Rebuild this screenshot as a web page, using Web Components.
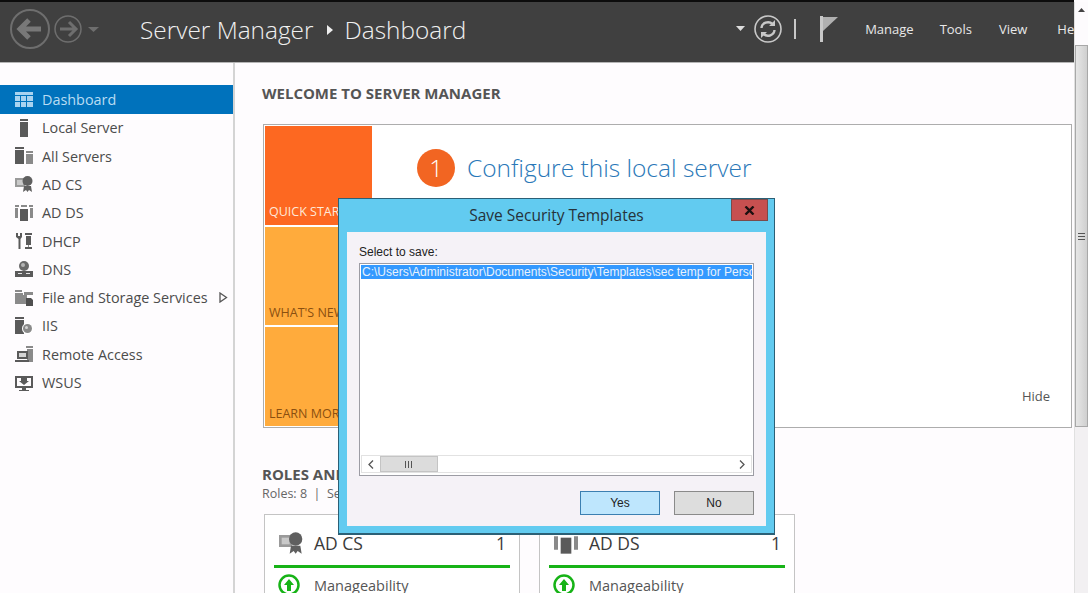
<!DOCTYPE html>
<html>
<head>
<meta charset="utf-8">
<title>Server Manager</title>
<style>
    html, body { margin: 0; height: 100%; overflow: hidden; background: #fefcfe; }
    body { font-family: "Open Sans", "Noto Sans", sans-serif; color: #444; }
</style>
</head>
<body>

<sm-app>
    <sm-header slot="header"></sm-header>

    <sm-nav slot="nav">
        <sm-nav-item label="Dashboard" active>
            <svg width="18" height="16" viewBox="0 0 18 16"><path fill="#a9d3f0" d="M0 0h18v3H0zM0 4h5v5H0zM6 4h5v5H6zM12 4h6v5h-6zM0 10h5v5H0zM6 10h5v5H6zM12 10h6v5h-6z"/></svg>
        </sm-nav-item>
        <sm-nav-item label="Local Server">
            <svg width="18" height="18" viewBox="0 0 18 18"><path fill="#5a5a5a" d="M5 0h8v2H5zM5 3h8v15H5z"/></svg>
        </sm-nav-item>
        <sm-nav-item label="All Servers">
            <svg width="18" height="18" viewBox="0 0 18 18"><path fill="#5a5a5a" d="M0 0h9v2H0zM0 3h9v14H0z"/><path fill="#8a8a8a" d="M11 4h7v2h-7zM11 7h7v10h-7z"/></svg>
        </sm-nav-item>
        <sm-nav-item label="AD CS">
            <svg width="18" height="18" viewBox="0 0 18 18"><path fill="#9a9a9a" d="M0 3h10v9H0z"/><path fill="#c9c9c9" d="M2 5h6v5H2z"/><circle cx="12.500" cy="6" r="5" fill="#5f5f5f"/><path fill="#5f5f5f" d="M9 11l-1 6 3-2 1.500 2 1.500-2 3 2-1-6z"/></svg>
        </sm-nav-item>
        <sm-nav-item label="AD DS">
            <svg width="18" height="18" viewBox="0 0 18 18"><path fill="#8a8a8a" d="M0 1h4v2H0zM14 1h4v2h-4zM0 4h3v10H0zM15 4h3v10h-3zM6 1h6v2H6z"/><path fill="#5a5a5a" d="M5 5h8v12H5z"/></svg>
        </sm-nav-item>
        <sm-nav-item label="DHCP">
            <svg width="18" height="18" viewBox="0 0 18 18"><path fill="#5a5a5a" d="M1 1h2v3h2V1h2v4L5.500 7v10h-2V7L1 5z"/><path fill="#5a5a5a" d="M10 1h7v2h-7zM11 4h5v9h-5zM10 15h7v2h-7z"/><path fill="#8a8a8a" d="M13 13h1v2h-1z"/></svg>
        </sm-nav-item>
        <sm-nav-item label="DNS">
            <svg width="18" height="18" viewBox="0 0 18 18"><circle cx="9" cy="6" r="5" fill="#6a6a6a"/><circle cx="8" cy="5" r="2" fill="#b5b5b5"/><path fill="#5a5a5a" d="M0 11h18v6H0z"/><path fill="#e5e5e5" d="M3 13h4v1H3zM11 13h4v1h-4z"/></svg>
        </sm-nav-item>
        <sm-nav-item label="File and Storage Services" arrow>
            <svg width="18" height="18" viewBox="0 0 18 18"><path fill="#8a8a8a" d="M0 1h7v2H0zM9 3h9v3H9zM0 4h8v11H0z"/><path fill="#8a8a8a" d="M8 6h4v9H8z"/><path fill="#4f4f4f" d="M11 9h5l2 2v6h-7z"/></svg>
        </sm-nav-item>
        <sm-nav-item label="IIS">
            <svg width="18" height="18" viewBox="0 0 18 18"><path fill="#5a5a5a" d="M0 0h9v2H0zM0 3h9v14H0z"/><circle cx="12.500" cy="11.500" r="5.500" fill="#fff"/><circle cx="12.500" cy="11.500" r="4.500" fill="#8a8a8a"/><circle cx="11.500" cy="10.500" r="1.500" fill="#d5d5d5"/></svg>
        </sm-nav-item>
        <sm-nav-item label="Remote Access">
            <svg width="18" height="18" viewBox="0 0 18 18"><path fill="#8a8a8a" d="M11 1h7v2h-7zM12 4h6v13h-6z"/><path fill="#5a5a5a" d="M2 6h11v8H2zM0 15h14v2H0z"/><path fill="#d5d5d5" d="M4 8h7v4H4z"/></svg>
        </sm-nav-item>
        <sm-nav-item label="WSUS">
            <svg width="18" height="18" viewBox="0 0 18 18"><path fill="none" stroke="#5a5a5a" stroke-width="2" d="M6 3H1v10h16V3h-5"/><path fill="#5a5a5a" d="M7 14h4v2h3v1H4v-1h3zM6 2h6v5h2l-5 4-5-4h2z"/></svg>
        </sm-nav-item>
    </sm-nav>

    <sm-welcome></sm-welcome>

    <sm-roles>
        <sm-role-card title="AD CS" count="1">
            <svg width="24" height="24" viewBox="0 0 18 18"><path fill="#9a9a9a" d="M0 3h10v9H0z"/><path fill="#c9c9c9" d="M2 5h6v5H2z"/><circle cx="12.500" cy="6" r="5" fill="#5f5f5f"/><path fill="#5f5f5f" d="M9 11l-1 6 3-2 1.500 2 1.500-2 3 2-1-6z"/></svg>
        </sm-role-card>
        <sm-role-card title="AD DS" count="1">
            <svg width="24" height="24" viewBox="0 0 18 18"><path fill="#8a8a8a" d="M0 1h4v2H0zM14 1h4v2h-4zM0 4h3v10H0zM15 4h3v10h-3zM6 1h6v2H6z"/><path fill="#5a5a5a" d="M5 5h8v12H5z"/></svg>
        </sm-role-card>
    </sm-roles>

    <sm-scrollbar slot="scroll"></sm-scrollbar>
</sm-app>

<sm-dialog title="Save Security Templates">
    C:\Users\Administrator\Documents\Security\Templates\sec temp for Personal Use.inf
</sm-dialog>

<script>
// little helper so every element below is just styles + markup
function shadowFrom(el, html) {
    const template = document.createElement('template')
    template.innerHTML = html
    el.attachShadow({ mode: 'open' })
    el.shadowRoot.appendChild(template.content.cloneNode(true))
}

class SmApp extends HTMLElement {
    constructor() {
        super()
        shadowFrom(this, `
            <style>
                :host { display: flex; height: 593px; width: 1088px; overflow: hidden; }
                #left { flex: 1; min-width: 0; display: flex; flex-direction: column; }
                #body { flex: 1; min-height: 0; display: flex; }
                #main { flex: 1; min-width: 0; padding: 20px 3px 0 27px; overflow: hidden; }
            </style>
            <div id="left">
                <slot name="header"></slot>
                <div id="body">
                    <slot name="nav"></slot>
                    <div id="main"><slot></slot></div>
                </div>
            </div>
            <slot name="scroll"></slot>
        `)
    }
}

class SmHeader extends HTMLElement {
    constructor() {
        super()
        shadowFrom(this, `
            <style>
                :host {
                    display: flex; align-items: center; box-sizing: border-box;
                    height: 63px; background: #404040; overflow: hidden;
                    border-top: 2px solid #0c0c0c; border-bottom: 1px solid #b5b5b5;
                    color: #eee; white-space: nowrap; padding-bottom: 6px;
                }
                svg { flex: none; display: block; }
                #crumb { font-size: 24.400px; font-weight: 300; line-height: 30px; margin-left: 29px; padding-top: 1px; color: #f0f0f0; display: flex; align-items: center; }
                #crumb svg { margin: 0 11px 0 12px; }
                #tools { display: flex; align-items: center; }
                .menu { font-size: 13px; color: #e8e8e8; }
            </style>
            <svg width="101" height="44" viewBox="0 0 101 44" style="margin-left:10px">
                <g fill="none" stroke="#6e6e6e">
                    <circle cx="20" cy="22" r="19" stroke-width="2"/>
                    <circle cx="58" cy="22" r="13" stroke-width="1.500"/>
                </g>
                <path fill="none" stroke="#787878" stroke-width="5" d="M10 22h21M19 13l-9 9 9 9"/>
                <path fill="none" stroke="#6e6e6e" stroke-width="3" d="M50 22h15M59 15l7 7-7 7"/>
                <path fill="#6e6e6e" d="M78 20h11l-5.500 5z"/>
            </svg>
            <div id="crumb">
                <span>Server Manager</span>
                <svg width="8" height="10" viewBox="0 0 8 10"><path fill="#eee" d="M1 0l6 5-6 5z"/></svg>
                <span>Dashboard</span>
            </div>
            <div id="tools" style="margin-left:270px">
                <svg width="9" height="6" viewBox="0 0 9 6"><path fill="#ddd" d="M0 0h9L4.500 5z"/></svg>
                <svg width="30" height="30" viewBox="0 0 30 30" style="margin-left:8px">
                    <circle cx="15" cy="15" r="13" fill="none" stroke="#c8c8c8" stroke-width="1.600"/>
                    <path fill="none" stroke="#c8c8c8" stroke-width="2.400" d="M8.500 14a6.500 6 0 0 1 11-4M21.500 16a6.500 6 0 0 1-11 4"/>
                    <path fill="#c8c8c8" d="M22 6v6h-6zM8 24v-6h6z"/>
                </svg>
                <svg width="2" height="20" viewBox="0 0 2 20" style="margin-left:11px"><path fill="#c8c8c8" d="M0 0h2v20H0z"/></svg>
                <svg width="20" height="26" viewBox="0 0 20 26" style="margin-left:24px">
                    <path fill="#c8c8c8" d="M0 0h3v26H0z"/><path fill="#b0b0b0" d="M3 1h15L3 15z"/>
                </svg>
                <span class="menu" style="margin-left:25px">Manage</span>
                <span class="menu" style="margin-left:26px">Tools</span>
                <span class="menu" style="margin-left:27px">View</span>
                <span class="menu" style="margin-left:30px">Help</span>
            </div>
        `)
    }
}

class SmNav extends HTMLElement {
    constructor() {
        super()
        shadowFrom(this, `
            <style>
                :host {
                    display: flex; flex-direction: column; flex: none; box-sizing: border-box;
                    width: 235px; padding-top: 22.400px; background: #fefcfe;
                    border-right: 2px solid #d4d4d4;
                }
            </style>
            <slot></slot>
        `)
    }
}

class SmNavItem extends HTMLElement {
    constructor() {
        super()
        const arrow = this.hasAttribute('arrow')
            ? '<svg id="arrow" width="9" height="11" viewBox="0 0 9 11"><path fill="none" stroke="#555" stroke-width="1.300" d="M1 1l6.500 4.500L1 10z"/></svg>'
            : ''
        shadowFrom(this, `
            <style>
                :host {
                    display: flex; align-items: center; height: 28.300px; box-sizing: border-box;
                    padding-left: 15px; font-size: 14.400px; color: #4c4c4c; white-space: nowrap;
                }
                :host([active]) { background: #0072bc; color: #b9dcf3; }
                #icon { width: 27px; flex: none; display: flex; }
                #arrow { margin-left: 11px; }
            </style>
            <div id="icon"><slot></slot></div>
            <span>${this.getAttribute('label')}</span>
            ${arrow}
        `)
    }
}

class SmWelcome extends HTMLElement {
    constructor() {
        super()
        shadowFrom(this, `
            <style>
                :host { display: block; }
                h2 { margin: 0; font-size: 15px; line-height: 20px; font-weight: 700; color: #555; white-space: nowrap; }
                #box {
                    box-sizing: border-box; height: 304px; margin: 21px 0 0 1px; width: 809px;
                    border: 1px solid #adadad; background: #fff; padding: 1px; display: flex;
                }
                #tiles { width: 107px; flex: none; display: flex; flex-direction: column; gap: 2px; }
                .tile {
                    flex: 1; display: flex; align-items: flex-end; box-sizing: border-box;
                    padding: 0 0 4.500px 4px; font-size: 12.500px; background: #ffab3c; color: #8a4f10; white-space: nowrap;
                }
                .tile.first { background: #fd6821; color: #ffe8d8; }
                #content { flex: 1; position: relative; display: flex; flex-direction: column; }
                #step { display: flex; align-items: center; margin: 22px 0 0 45px; }
                #num {
                    width: 38px; height: 38px; border-radius: 50%; background: #f26522; color: #fff;
                    font-size: 24px; font-weight: 300; display: flex; align-items: center; justify-content: center;
                }
                #step span { margin-left: 12px; padding-top: 1px; font-size: 24.500px; font-weight: 300; line-height: 38px; color: #2a78b8; }
                #hide { margin: auto 20px 21px auto; font-size: 13px; color: #555; }
            </style>
            <h2>WELCOME TO SERVER MANAGER</h2>
            <div id="box">
                <div id="tiles">
                    <div class="tile first">QUICK START</div>
                    <div class="tile">WHAT'S NEW</div>
                    <div class="tile">LEARN MORE</div>
                </div>
                <div id="content">
                    <div id="step"><div id="num">1</div><span>Configure this local server</span></div>
                    <div id="hide">Hide</div>
                </div>
            </div>
        `)
    }
}

class SmRoles extends HTMLElement {
    constructor() {
        super()
        shadowFrom(this, `
            <style>
                :host { display: block; margin-top: 36px; }
                h2 { margin: 0; font-size: 15px; line-height: 20px; font-weight: 700; color: #555; white-space: nowrap; }
                p { margin: 1px 0 0; font-size: 12.500px; line-height: 18px; color: #666; white-space: nowrap; }
                #cards { display: flex; gap: 19px; margin: 11px 0 0 2px; }
            </style>
            <h2>ROLES AND SERVER GROUPS</h2>
            <p>Roles: 8 &nbsp;|&nbsp; Server groups: 1 &nbsp;|&nbsp; Servers total: 1</p>
            <div id="cards"><slot></slot></div>
        `)
    }
}

class SmRoleCard extends HTMLElement {
    constructor() {
        super()
        shadowFrom(this, `
            <style>
                :host {
                    display: block; box-sizing: border-box; width: 256px; height: 100px; flex: none;
                    border: 1px solid #c4c4c4; background: #fff; padding: 0 9px;
                }
                #top { display: flex; align-items: center; height: 45px; border-bottom: 3px solid #17b317; font-size: 17.500px; color: #3a3a3a; padding: 5px 4px 0 5px; }
                #top span:first-of-type { margin-left: 11px; flex: 1; }
                #icon { display: flex; width: 24px; }
                #row { display: flex; align-items: center; height: 34px; padding-left: 3px; font-size: 14.500px; color: #555; }
                #row svg { margin-right: 13px; }
            </style>
            <div id="top">
                <div id="icon"><slot></slot></div>
                <span>${this.getAttribute('title')}</span>
                <span>${this.getAttribute('count')}</span>
            </div>
            <div id="row">
                <svg width="24" height="24" viewBox="0 0 24 24">
                    <circle cx="12" cy="12" r="9.500" fill="#fff" stroke="#17b317" stroke-width="2.500"/>
                    <path fill="#17b317" d="M12 6l5 6h-3v6h-4v-6H7z"/>
                </svg>
                Manageability
            </div>
        `)
    }
}

class SmScrollbar extends HTMLElement {
    constructor() {
        super()
        shadowFrom(this, `
            <style>
                :host { display: flex; flex-direction: column; flex: none; width: 13px; margin-top: 2px; background: #f2f0f2; border-left: 1px solid #e0e0e0; }
                #up { height: 43px; display: flex; justify-content: center; padding-top: 6px; box-sizing: border-box; background: #fdfbfd; }
                #thumb {
                    height: 382px; display: flex; align-items: center; justify-content: center;
                    border: 1px solid #a8a8a8; box-sizing: border-box;
                    background: linear-gradient(90deg, #e6e6e6, #dcdcdc 45%, #cfcfcf);
                }
            </style>
            <div id="up"><svg width="7" height="4" viewBox="0 0 7 4"><path fill="#444" d="M0 4l3.500-4L7 4z"/></svg></div>
            <div id="thumb"><svg width="7" height="7" viewBox="0 0 7 7"><path fill="#555" d="M0 0h7v1H0zM0 3h7v1H0zM0 6h7v1H0z"/></svg></div>
        `)
    }
}

// the modal lies over the page, this is the only thing placed by coordinates
class SmDialog extends HTMLElement {
    constructor() {
        super()
        shadowFrom(this, `
            <style>
                :host {
                    position: absolute; left: 338px; top: 198px; width: 437px; height: 337px;
                    box-sizing: border-box; border: 1px solid #2b6076; border-bottom-width: 2px;
                    background: #62cbf0; display: flex; flex-direction: column;
                    padding: 0 8px 7px 8px; font-family: "Liberation Sans", sans-serif;
                }
                #bar { height: 33px; flex: none; display: flex; align-items: center; justify-content: center; position: relative; }
                #title { font-family: "Open Sans", sans-serif; font-size: 15.500px; color: #26323a; padding-bottom: 2px; }
                #close {
                    position: absolute; right: -2px; top: 0; width: 37px; height: 22px; box-sizing: border-box;
                    background: #c75050; border: 1px solid #7b4a4a; display: flex; align-items: center; justify-content: center;
                }
                #inner {
                    flex: 1; background: #f5f2f7; padding: 13px 12px 13px 12px; display: flex; flex-direction: column;
                    min-height: 0;
                }
                #label { font-size: 12px; line-height: 15px; color: #222; margin-bottom: 3px; }
                #list { height: 213px; flex: none; box-sizing: border-box; border: 1px solid #9c9ca4; background: #fff; display: flex; flex-direction: column; padding: 1px; }
                #rows { flex: 1; min-height: 0; overflow: hidden; }
                #sel {
                    height: 14px; line-height: 14px; background: #3399ff; color: #e8f2fc; white-space: nowrap; overflow: hidden;
                    font-size: 12px; padding-left: 1px;
                }
                #hbar { height: 18px; margin-bottom: 1px; display: flex; align-items: stretch; border: 1px solid #e2e2e2; box-sizing: border-box; }
                .sb { width: 18px; flex: none; display: flex; align-items: center; justify-content: center; }
                #hthumb { width: 58px; flex: none; background: #dcdcdc; border: 1px solid #c4c4c4; box-sizing: border-box; display: flex; align-items: center; justify-content: center; }
                #track { flex: 1; }
                #btns { display: flex; justify-content: flex-end; gap: 14px; margin-top: 15px; }
                .btn {
                    width: 80px; height: 24px; box-sizing: border-box; display: flex; align-items: center; justify-content: center;
                    font-size: 12px; color: #222; background: #dddddd; border: 1px solid #8a8a8a;
                }
                .btn.def { background: #bee6fd; border-color: #3c7fb1; }
            </style>
            <div id="bar">
                <div id="title">${this.getAttribute('title')}</div>
                <div id="close"><svg width="11" height="9" viewBox="0 0 11 9"><path fill="none" stroke="#1c1010" stroke-width="2.400" d="M1.500 0.500l8 8M9.500 0.500l-8 8"/></svg></div>
            </div>
            <div id="inner">
                <div id="label">Select to save:</div>
                <div id="list">
                    <div id="rows"><div id="sel"><slot></slot></div></div>
                    <div id="hbar">
                        <div class="sb"><svg width="6" height="9" viewBox="0 0 6 9"><path fill="none" stroke="#555" stroke-width="1.300" d="M5 0.500l-4 4 4 4"/></svg></div>
                        <div id="hthumb"><svg width="9" height="7" viewBox="0 0 9 7"><path fill="#555" d="M0 0h1v7H0zM3 0h1v7H3zM6 0h1v7H6z"/></svg></div>
                        <div id="track"></div>
                        <div class="sb"><svg width="6" height="9" viewBox="0 0 6 9"><path fill="none" stroke="#555" stroke-width="1.300" d="M1 0.500l4 4-4 4"/></svg></div>
                    </div>
                </div>
                <div id="btns">
                    <div class="btn def">Yes</div>
                    <div class="btn">No</div>
                </div>
            </div>
        `)
    }
}

window.customElements.define('sm-app', SmApp)
window.customElements.define('sm-header', SmHeader)
window.customElements.define('sm-nav', SmNav)
window.customElements.define('sm-nav-item', SmNavItem)
window.customElements.define('sm-welcome', SmWelcome)
window.customElements.define('sm-roles', SmRoles)
window.customElements.define('sm-role-card', SmRoleCard)
window.customElements.define('sm-scrollbar', SmScrollbar)
window.customElements.define('sm-dialog', SmDialog)
</script>
</body>
</html>
